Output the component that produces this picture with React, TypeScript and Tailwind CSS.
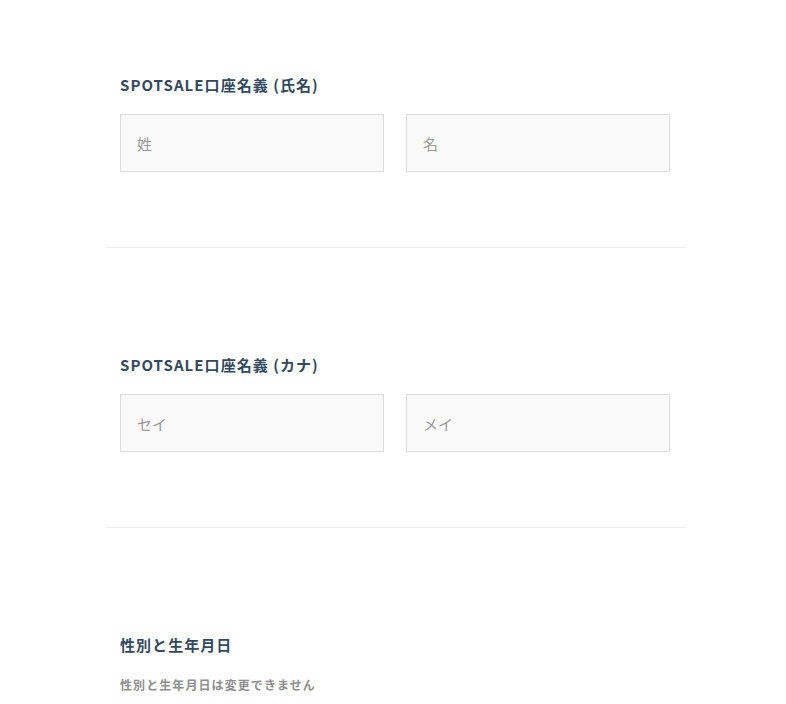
import React from 'react';

const font = { fontFamily: '"Noto Sans CJK JP", "Noto Sans", sans-serif' };

function NameFields({ title, first, last }: { title: string; first: string; last: string }) {
  return (
    <div className="border-b border-[#eeeeee] px-[14px] pb-[75px]">
      <h2 className="mb-[17px] h-6 text-[15px] font-bold leading-6 tracking-[0.07em] text-[#34495e]">{title}</h2>
      <div className="flex gap-[22px]">
        <input
          className="h-[58px] w-[264px] border border-[#dddddd] bg-[#f9f9f9] px-4 text-[15px] text-[#333] placeholder:text-[#999999] outline-none"
          placeholder={first}
        />
        <input
          className="h-[58px] w-[264px] border border-[#dddddd] bg-[#f9f9f9] px-4 text-[15px] text-[#333] placeholder:text-[#999999] outline-none"
          placeholder={last}
        />
      </div>
    </div>
  );
}

export default function App() {
  return (
    <div className="min-h-screen bg-white" style={font}>
      <div className="ml-[106px] w-[580px]">
        <div className="pt-[73px]">
          <NameFields title="SPOTSALE口座名義 (氏名)" first="姓" last="名" />
        </div>
        <div className="pt-[105px]">
          <NameFields title="SPOTSALE口座名義 (カナ)" first="セイ" last="メイ" />
        </div>
        <div className="px-[14px] pt-[105px]">
          <h2 className="h-6 text-[15px] font-bold leading-6 tracking-[0.07em] text-[#34495e]">性別と生年月日</h2>
          <p className="mt-[19px] text-[12px] font-bold leading-[18px] tracking-[0.09em] text-[#8e8e8e]">
            性別と生年月日は変更できません
          </p>
        </div>
      </div>
    </div>
  );
}
